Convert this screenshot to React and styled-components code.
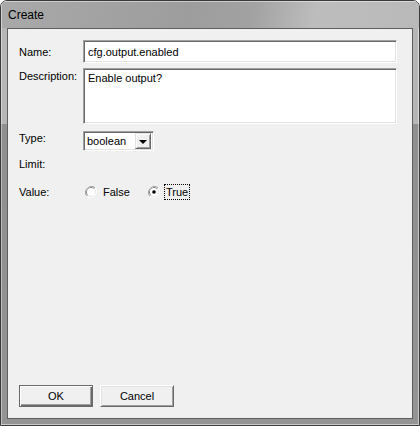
import styled, { createGlobalStyle } from 'styled-components';

const GlobalStyle = createGlobalStyle`
    html, body {
        margin: 0;
        padding: 0;
        background: #ffffff;
    }
    * {
        box-sizing: border-box;
    }
`;

const uiFont = `'Liberation Sans', Arial, sans-serif`;

const Window = styled.div`
    width: 420px;
    height: 426px;
    display: flex;
    flex-direction: column;
    border: 1px solid #3a3a3a;
    border-radius: 7px 7px 0 0;
    overflow: hidden;
    font-family: ${uiFont};
    font-size: 11px;
    color: #000;
`;

const TitleBar = styled.div`
    height: 27px;
    flex-shrink: 0;
    display: flex;
    align-items: center;
    padding-left: 7px;
    padding-top: 1px;
    background: linear-gradient(100deg, #a9a9a9 0%, #9d9d9d 45%, #a2a2a2 60%, #bdbdbd 75%, #b9b9b9 100%);
    box-shadow: inset 1px 1px 0 rgba(255, 255, 255, 0.45);
    font-size: 12px;
`;

const Frame = styled.div`
    flex: 1;
    display: flex;
    padding: 0 6px 6px 6px;
    background: linear-gradient(to bottom, #b6b6b6 0, #b6b6b6 96px, #8f8f8f 96px, #949494 100%);
    box-shadow: inset 1px 0 0 rgba(255, 255, 255, 0.4), inset -1px -1px 0 rgba(255, 255, 255, 0.5);
`;

const Client = styled.div`
    flex: 1;
    display: flex;
    flex-direction: column;
    justify-content: space-between;
    border: 1px solid #5e5e5e;
    background: #f0f0f0;
    padding: 11px 15px 11px 11px;
`;

const Form = styled.div`
    display: flex;
    flex-direction: column;
`;

const Row = styled.div`
    display: grid;
    grid-template-columns: 64px 1fr;
    align-items: ${(p) => (p.$top ? 'start' : 'center')};
    margin-top: ${(p) => p.$gap || 0}px;
    min-height: ${(p) => p.$height || 18}px;
`;

const Label = styled.span`
    padding-top: ${(p) => p.$pad || 0}px;
    line-height: 14px;
`;

const sunken = `
    border: 1px solid;
    border-color: #a0a0a0 #ffffff #ffffff #a0a0a0;
    box-shadow: inset 1px 1px 0 #696969, inset -1px -1px 0 #e3e3e3;
    background: #ffffff;
`;

const TextBox = styled.div`
    ${sunken}
    height: ${(p) => p.$height}px;
    padding: ${(p) => (p.$multi ? '2px 4px' : '0 4px')};
    display: flex;
    align-items: ${(p) => (p.$multi ? 'flex-start' : 'center')};
    line-height: 14px;
`;

const Select = styled.div`
    ${sunken}
    width: 71px;
    height: 20px;
    display: flex;
    align-items: center;
    justify-content: space-between;
    padding: 2px 2px 2px 3px;
`;

const DropButton = styled.div`
    width: 16px;
    height: 16px;
    background: #f0f0f0;
    border: 1px solid;
    border-color: #e3e3e3 #696969 #696969 #e3e3e3;
    box-shadow: inset 1px 1px 0 #ffffff, inset -1px -1px 0 #a0a0a0;
    display: flex;
    align-items: center;
    justify-content: center;
`;

const Arrow = styled.span`
    width: 0;
    height: 0;
    border-left: 4px solid transparent;
    border-right: 4px solid transparent;
    border-top: 4px solid #000;
    margin-top: 1px;
`;

const RadioGroup = styled.div`
    display: flex;
    align-items: center;
    gap: 16px;
    padding-left: 2px;
`;

const RadioOption = styled.label`
    display: flex;
    align-items: center;
    gap: 4px;
`;

const RadioText = styled.span`
    padding: 1px 1px;
    line-height: 12px;
    border: 1px dotted ${(p) => (p.$focus ? '#000' : 'transparent')};
`;

const ButtonRow = styled.div`
    display: flex;
    gap: 7px;
`;

const Button = styled.button`
    width: 74px;
    height: 22px;
    font-family: ${uiFont};
    font-size: 11px;
    color: #000;
    background: #f0f0f0;
    border: 1px solid;
    border-color: ${(p) => (p.$default ? '#6a6a6a' : '#ffffff #696969 #696969 #ffffff')};
    box-shadow: ${(p) =>
        p.$default
            ? 'inset 1px 1px 0 #ffffff, inset -1px -1px 0 #696969, inset -2px -2px 0 #a0a0a0'
            : 'inset 1px 1px 0 #e3e3e3, inset -1px -1px 0 #a0a0a0'};
    padding: 0;
`;

function Radio({ checked }) {
    return (
        <svg width="12" height="12" viewBox="0 0 12 12">
            <path d="M10.2 1.8 A6 6 0 0 0 1.8 10.2" fill="none" stroke="#a0a0a0" strokeWidth="1" />
            <path d="M9.3 2.7 A4.7 4.7 0 0 0 2.7 9.3" fill="none" stroke="#696969" strokeWidth="1" />
            <path d="M10.2 1.8 A6 6 0 0 1 1.8 10.2" fill="none" stroke="#ffffff" strokeWidth="1" />
            <path d="M9.3 2.7 A4.7 4.7 0 0 1 2.7 9.3" fill="none" stroke="#e3e3e3" strokeWidth="1" />
            <circle cx="6" cy="6" r="4" fill="#ffffff" />
            {checked && <circle cx="6" cy="6" r="1.8" fill="#000000" />}
        </svg>
    );
}

function App() {
    return (
        <Window>
            <GlobalStyle />
            <TitleBar>Create</TitleBar>
            <Frame>
                <Client>
                    <Form>
                        <Row $height={23}>
                            <Label>Name:</Label>
                            <TextBox $height={23}>cfg.output.enabled</TextBox>
                        </Row>
                        <Row $gap={5} $height={56} $top>
                            <Label $pad={1}>Description:</Label>
                            <TextBox $height={56} $multi>Enable output?</TextBox>
                        </Row>
                        <Row $gap={7} $height={20} $top>
                            <Label>Type:</Label>
                            <Select>
                                <span>boolean</span>
                                <DropButton>
                                    <Arrow />
                                </DropButton>
                            </Select>
                        </Row>
                        <Row $gap={4}>
                            <Label>Limit:</Label>
                        </Row>
                        <Row $gap={10}>
                            <Label>Value:</Label>
                            <RadioGroup>
                                <RadioOption>
                                    <Radio />
                                    <RadioText>False</RadioText>
                                </RadioOption>
                                <RadioOption>
                                    <Radio checked />
                                    <RadioText $focus>True</RadioText>
                                </RadioOption>
                            </RadioGroup>
                        </Row>
                    </Form>
                    <ButtonRow>
                        <Button $default>OK</Button>
                        <Button>Cancel</Button>
                    </ButtonRow>
                </Client>
            </Frame>
        </Window>
    );
}

export default App;
